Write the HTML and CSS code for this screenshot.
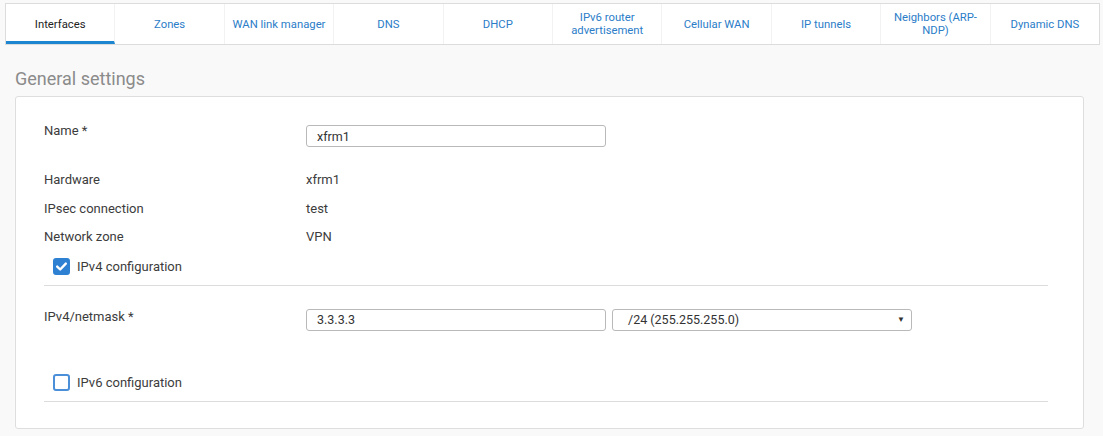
FILE: index.html
```html
<!DOCTYPE html>
<html>
<head>
<meta charset="utf-8">
<link rel="stylesheet" href="styles.css">
</head>
<body>
<div class="page">
  <nav class="tabs">
    <div class="tab active">Interfaces</div>
    <div class="tab">Zones</div>
    <div class="tab">WAN link manager</div>
    <div class="tab">DNS</div>
    <div class="tab">DHCP</div>
    <div class="tab">IPv6 router<br>advertisement</div>
    <div class="tab">Cellular WAN</div>
    <div class="tab">IP tunnels</div>
    <div class="tab">Neighbors (ARP-<br>NDP)</div>
    <div class="tab">Dynamic DNS</div>
  </nav>
  <h2 class="heading">General settings</h2>
  <section class="panel">
    <div class="row row-input">
      <div class="label">Name *</div>
      <div class="field"><input class="text-input" type="text" value="xfrm1"></div>
    </div>
    <div class="info">
      <div class="row row-info"><div class="label">Hardware</div><div class="value">xfrm1</div></div>
      <div class="row row-info"><div class="label">IPsec connection</div><div class="value">test</div></div>
      <div class="row row-info"><div class="label">Network zone</div><div class="value">VPN</div></div>
    </div>
    <div class="check-row check-first">
      <span class="checkbox checked">
        <svg viewBox="0 0 17 17" width="17" height="17"><path d="M4.2 8.6 L7.2 11.5 L12.8 5.6" fill="none" stroke="#fff" stroke-width="2.4" stroke-linecap="round" stroke-linejoin="round"/></svg>
      </span>
      <span class="check-label">IPv4 configuration</span>
    </div>
    <div class="divider"></div>
    <div class="row row-input row-ip">
      <div class="label">IPv4/netmask *</div>
      <div class="field fields">
        <input class="text-input" type="text" value="3.3.3.3">
        <div class="select"><span class="select-text">/24 (255.255.255.0)</span><span class="arrow">&#9660;</span></div>
      </div>
    </div>
    <div class="check-row check-second">
      <span class="checkbox"></span>
      <span class="check-label">IPv6 configuration</span>
    </div>
    <div class="divider"></div>
  </section>
</div>
</body>
</html>
```

FILE: styles.css
```css
html, body {
  margin: 0;
  padding: 0;
  background: #f9f9f9;
  font-family: Roboto, "Liberation Sans", Arial, sans-serif;
  font-size: 13px;
  color: #3c3c3c;
}
.page {
  padding: 3px 3px 0 5px;
  width: 1095px;
}
.tabs {
  display: flex;
  box-sizing: border-box;
  width: 1095px;
  background: #fff;
  border: 1px solid #dcdcdc;
  height: 42px;
}
.tab {
  flex: 1;
  display: flex;
  align-items: center;
  justify-content: center;
  text-align: center;
  color: #2b7dc8;
  font-size: 11.3px;
  line-height: 13px;
  border-right: 1px solid #f2f2f2;
  box-sizing: border-box;
}
.tab:last-child { border-right: none; }
.tab.active {
  color: #222;
  border-bottom: 3px solid #1d86d0;
  padding-top: 3px;
}
.heading {
  margin: 23px 0 0 10px;
  font-size: 18px;
  font-weight: 400;
  color: #8b8b8b;
  line-height: 22px;
  height: 28px;
}
.panel {
  margin-left: 10px;
  width: 1069px;
  box-sizing: border-box;
  background: #fff;
  border: 1px solid #dedede;
  border-radius: 3px;
  padding: 25px 35px 26px 28px;
}
.row {
  display: flex;
}
.label {
  width: 262px;
  flex: none;
}
.row-input .label {
  line-height: 16px;
  padding-top: 1px;
}
.field {
  padding-top: 3px;
}
.fields {
  display: flex;
  gap: 6px;
}
.text-input {
  width: 300px;
  height: 22px;
  box-sizing: border-box;
  border: 1px solid #b9b9b9;
  border-radius: 3px;
  padding: 0 10px;
  font-family: inherit;
  font-size: 12.5px;
  color: #333;
  margin: 0;
  outline: none;
}
.select {
  width: 300px;
  height: 22px;
  box-sizing: border-box;
  border: 1px solid #b9b9b9;
  border-radius: 3px;
  display: flex;
  align-items: center;
  justify-content: space-between;
  padding: 0 6px 0 15px;
  color: #333;
  font-size: 12.5px;
}
.arrow {
  font-size: 8px;
  color: #333;
}
.info {
  margin-top: 19px;
  line-height: 28.5px;
}
.row-info {
  height: 28.5px;
}
.check-row {
  display: flex;
  align-items: center;
  padding-left: 9px;
  gap: 7px;
  height: 17px;
}
.check-first {
  margin-top: 6px;
}
.check-second {
  margin-top: 43px;
}
.checkbox {
  width: 17px;
  height: 17px;
  box-sizing: border-box;
  border-radius: 3px;
  border: 2px solid #4a8fd8;
  background: #fff;
  display: block;
  flex: none;
}
.checkbox.checked {
  background: #2d80d2;
  border-color: #2d80d2;
  position: relative;
}
.checkbox.checked svg {
  position: absolute;
  left: -2px;
  top: -2px;
}
.check-label {
  line-height: 17px;
}
.divider {
  height: 1px;
  background: #dcdcdc;
  margin-top: 10px;
}
.row-ip {
  margin-top: 20px;
}
.row-ip .label {
  padding-top: 3px;
}
```
